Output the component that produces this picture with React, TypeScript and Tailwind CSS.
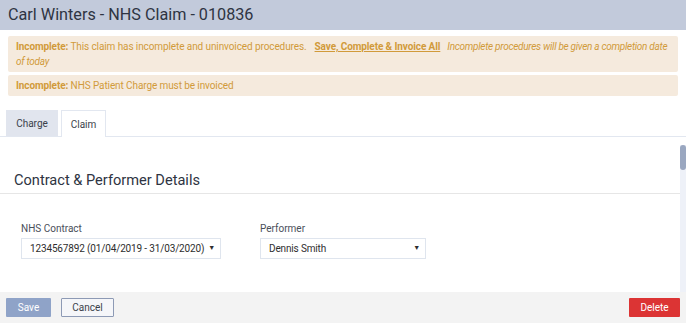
import React from "react";

export default function App() {
  return (
    <div className="w-[686px] h-[323px] flex flex-col bg-white overflow-hidden" style={{ fontFamily: "Roboto, 'Liberation Sans', sans-serif" }}>
      <div className="h-[30px] shrink-0 bg-[#c2cadb] flex items-center px-[8px] text-[16.2px] text-[#2e3442] whitespace-nowrap">
        Carl Winters - NHS Claim - 010836
      </div>
      <div className="px-[8px] pt-[6px] flex flex-col gap-[3px] shrink-0">
        <div className="bg-[#f5eadd] rounded-[2px] px-[8px] py-[3px] text-[10px] tracking-[-0.1px] leading-[15px] text-[#d19a3a]">
          <span className="font-bold">Incomplete:</span> This claim has incomplete and uninvoiced procedures.
          <span className="font-bold underline ml-[8px]">Save, Complete &amp; Invoice All</span>
          <span className="italic ml-[7px] tracking-[-0.28px]">Incomplete procedures will be given a completion date of today</span>
        </div>
        <div className="bg-[#f5eadd] rounded-[2px] px-[8px] py-[3px] text-[10px] tracking-[-0.1px] leading-[15px] text-[#d19a3a]">
          <span className="font-bold">Incomplete:</span> NHS Patient Charge must be invoiced
        </div>
      </div>
      <div className="mt-[14px] shrink-0 flex items-end gap-[3px] pl-[6px] border-b border-[#e2e7f0] h-[27px]">
        <div className="h-[26px] w-[52px] bg-[#e1e5ee] flex items-center justify-center text-[10px] text-[#3a3f4a]">Charge</div>
        <div className="h-[27px] w-[45px] bg-white border border-b-0 border-[#e2e7f0] -mb-px flex items-center justify-center text-[10px] text-[#3a3f4a]">Claim</div>
      </div>
      <div className="flex-1 flex min-h-0">
        <div className="flex-1 flex flex-col">
          <div className="pt-[35px] pb-[4px] pl-[14px] border-b border-[#e6e6e6] text-[14.6px] leading-[17px] text-[#2e3442] whitespace-nowrap">
            Contract &amp; Performer Details
          </div>
          <div className="flex gap-[39px] pl-[21px] pt-[29px]">
            <div className="flex flex-col">
              <div className="text-[10px] leading-[12px] text-[#4a4f5a] mb-[3px]">NHS Contract</div>
              <div className="w-[200px] h-[21px] border border-[#dfe5ee] flex items-center justify-between pl-[8px] pr-[5px] text-[10px] tracking-[-0.15px] text-[#2e2e2e] whitespace-nowrap">
                <span>1234567892 (01/04/2019 - 31/03/2020)</span>
                <span className="text-[7px]">▼</span>
              </div>
            </div>
            <div className="flex flex-col">
              <div className="text-[10px] leading-[12px] text-[#4a4f5a] mb-[3px]">Performer</div>
              <div className="w-[166px] h-[21px] border border-[#dfe5ee] flex items-center justify-between pl-[8px] pr-[5px] text-[10px] tracking-[-0.15px] text-[#2e2e2e] whitespace-nowrap">
                <span>Dennis Smith</span>
                <span className="text-[7px]">▼</span>
              </div>
            </div>
          </div>
        </div>
        <div className="w-[6px] mt-[8px] bg-[#eef1f8] flex flex-col">
          <div className="h-[25px] bg-[#9aa7c0] rounded-[3px]"></div>
        </div>
      </div>
      <div className="h-[31px] shrink-0 bg-[#f3f3f3] flex items-center justify-between px-[6px]">
        <div className="flex gap-[10px]">
          <div className="w-[45px] h-[19px] bg-[#8fa3c8] rounded-[1px] text-white text-[10px] flex items-center justify-center">Save</div>
          <div className="w-[53px] h-[19px] border border-[#8d9ab5] bg-[#f5f6f9] rounded-[1px] text-[#3a3f4a] text-[10px] flex items-center justify-center">Cancel</div>
        </div>
        <div className="w-[51px] h-[19px] bg-[#dc3434] rounded-[1px] text-white text-[10px] flex items-center justify-center">Delete</div>
      </div>
    </div>
  );
}
